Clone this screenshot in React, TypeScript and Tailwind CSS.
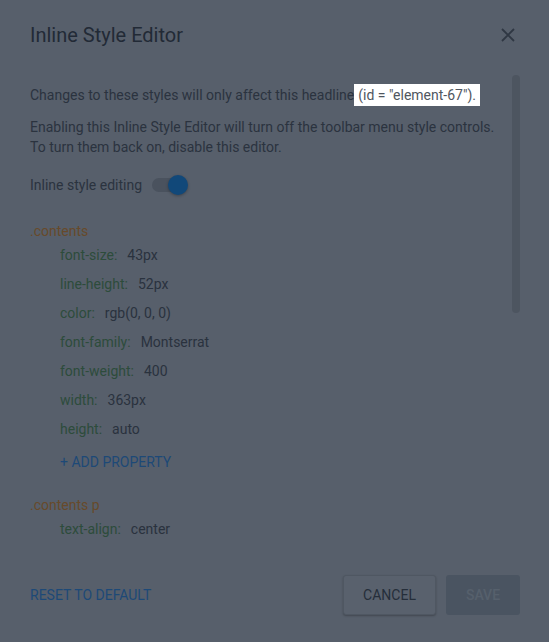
import React from "react";

const props: [string, string][] = [
  ["font-size:", "43px"],
  ["line-height:", "52px"],
  ["color:", "rgb(0, 0, 0)"],
  ["font-family:", "Montserrat"],
  ["font-weight:", "400"],
  ["width:", "363px"],
  ["height:", "auto"],
];

function Prop({ name, value }: { name: string; value: string }) {
  return (
    <div className="h-[29px] flex items-center pl-[30px] gap-[10px]">
      <span className="text-[#2d4c3b]">{name}</span>
      <span className="text-[#2a323e]">{value}</span>
    </div>
  );
}

export default function App() {
  return (
    <div
      className="relative w-[549px] h-[642px] bg-[#575f6b] overflow-hidden flex flex-col text-[14px] leading-[20px]"
      style={{ fontFamily: "Roboto, 'Liberation Sans', sans-serif" }}
    >
      <div className="flex items-center justify-between pl-[30px] pr-[34px] pt-[21px] h-[49px]">
        <h1 className="text-[20px] leading-[28px] text-[#222a36] font-normal">Inline Style Editor</h1>
        <svg width="14" height="14" viewBox="0 0 14 14" className="text-[#2f3743]">
          <path d="M1 1 L13 13 M13 1 L1 13" stroke="currentColor" strokeWidth="1.8" />
        </svg>
      </div>

      <div className="relative flex-1 pl-[30px] pr-[40px]">
        <p className="mt-[36px] text-[#2b333f] whitespace-nowrap">
          Changes to these styles will only affect this headline
          <span className="relative bg-white text-[#4f5660] px-[4px] py-[3px]">(id = "element-67").</span>
        </p>
        <p className="mt-[12px] text-[#2b333f] whitespace-nowrap">
          Enabling this Inline Style Editor will turn off the toolbar menu style controls.
          <br />
          To turn them back on, disable this editor.
        </p>
        <div className="mt-[16px] h-[24px] flex items-center gap-[10px] text-[#2b333f]">
          <span>Inline style editing</span>
          <div className="relative w-[34px] h-[14px] rounded-full bg-[#4a525e]">
            <div className="absolute left-[16px] top-[-3px] w-[20px] h-[20px] rounded-full bg-[#114879] shadow-[0_1px_3px_rgba(0,0,0,0.3)]" />
          </div>
        </div>

        <div className="mt-[24px] text-[#674a2a]">.contents</div>
        <div className="flex flex-col -mt-[1px]">
          {props.map(([n, v]) => (
            <Prop key={n} name={n} value={v} />
          ))}
        </div>
        <div className="mt-[9px] pl-[30px] text-[#1d4977] uppercase">+ Add Property</div>

        <div className="mt-[23px] text-[#674a2a]">.contents p</div>
        <div className="-mt-[1px]">
          <Prop name="text-align:" value="center" />
        </div>

        <div className="absolute right-[29px] top-[26px] w-[8px] h-[238px] rounded-full bg-[#4d5560]" />
      </div>

      <div className="flex items-center justify-between pl-[30px] pr-[29px] pb-[27px] pt-[10px]">
        <span className="text-[#1d4977] uppercase">Reset to default</span>
        <div className="flex gap-[10px]">
          <button className="w-[93px] h-[40px] rounded-[3px] border border-[#4f5762] bg-[#59616d] text-[#252e3a] uppercase shadow-[0_1px_2px_rgba(0,0,0,0.25)]">
            Cancel
          </button>
          <button className="w-[74px] h-[40px] rounded-[3px] bg-[#4a5461] text-[#56606c] uppercase font-medium">
            Save
          </button>
        </div>
      </div>
    </div>
  );
}
